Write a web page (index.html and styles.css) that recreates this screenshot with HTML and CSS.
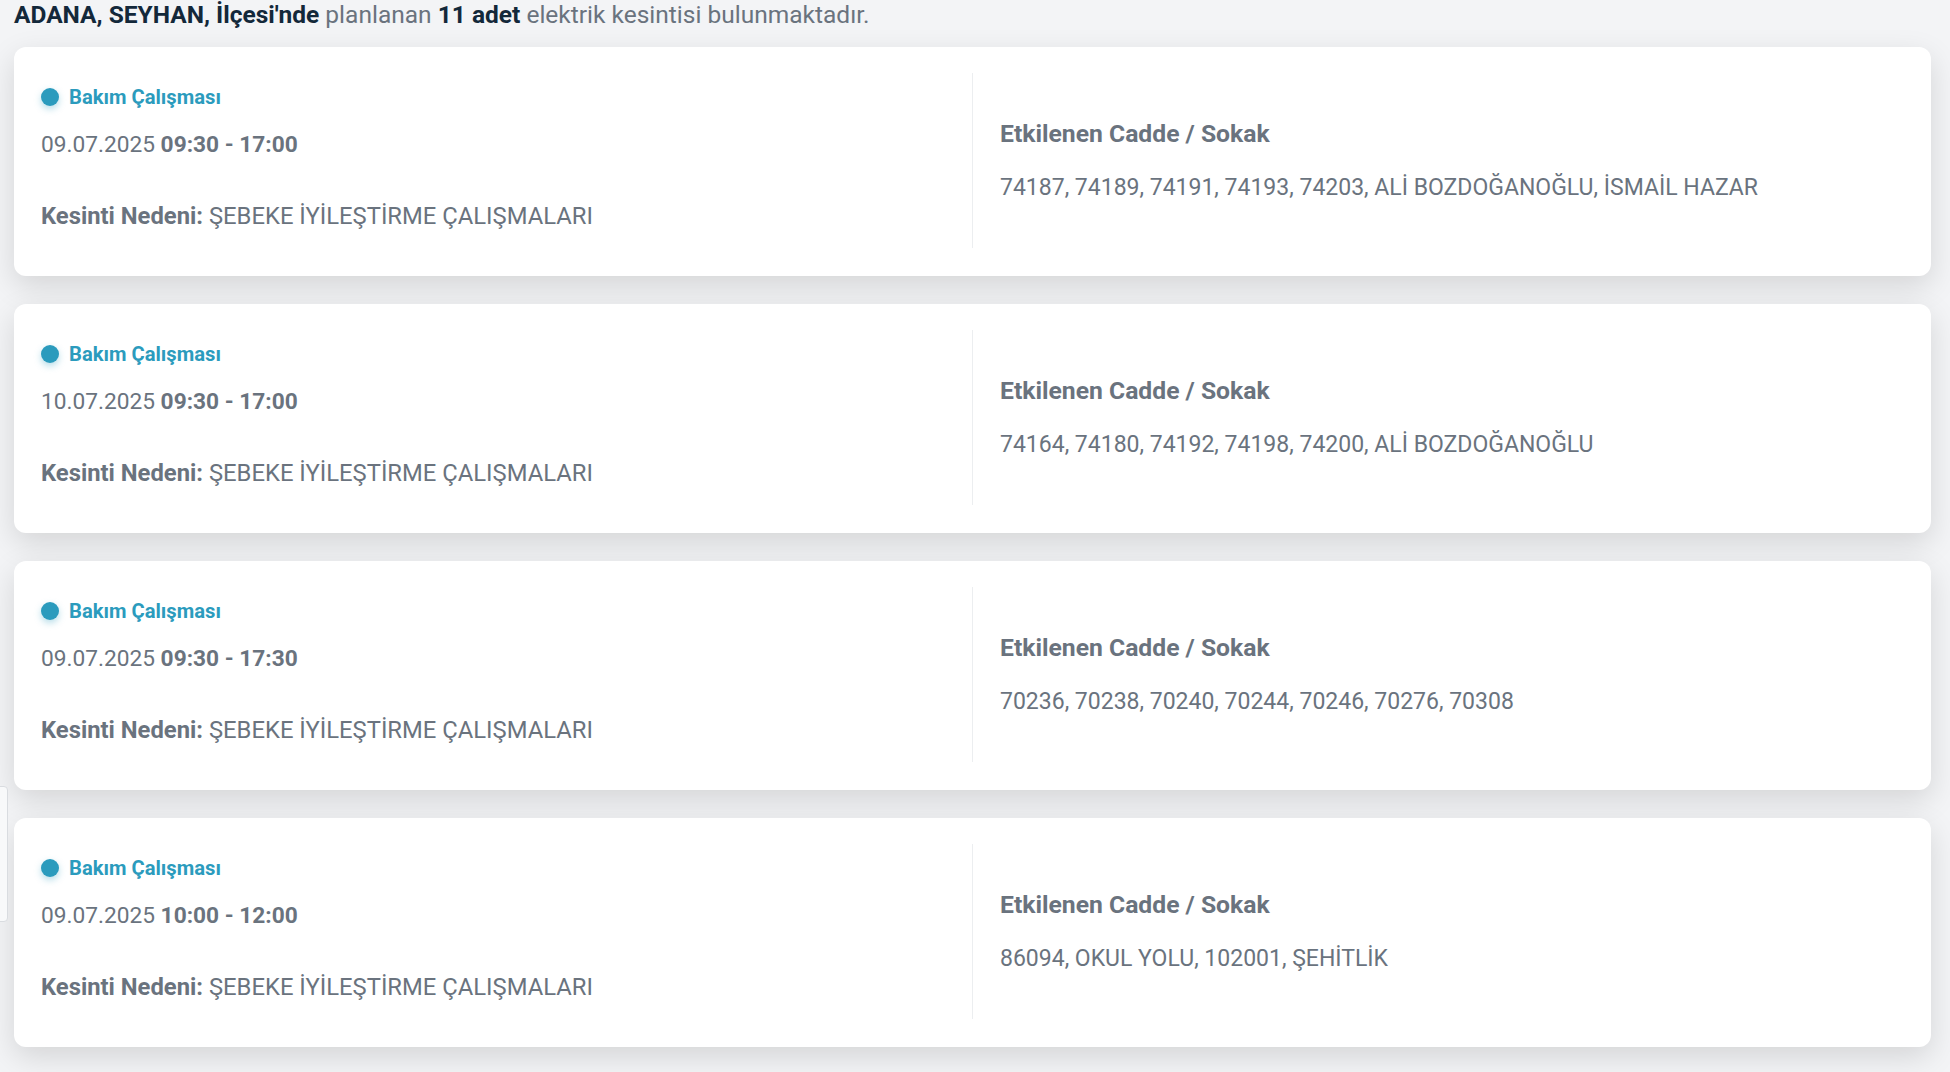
FILE: index.html
```html
<!DOCTYPE html>
<html lang="tr">
<head>
<meta charset="utf-8">
<title>Kesintiler</title>
<link rel="stylesheet" href="styles.css">
</head>
<body>
<div class="page">
  <p class="summary"><strong>ADANA, SEYHAN, İlçesi'nde</strong> planlanan <strong>11 adet</strong> elektrik kesintisi bulunmaktadır.</p>

  <div class="card">
    <div class="col col-left">
      <div class="label"><span class="dot"></span>Bakım Çalışması</div>
      <div class="date">09.07.2025 <b>09:30 - 17:00</b></div>
      <div class="reason"><b>Kesinti Nedeni:</b> ŞEBEKE İYİLEŞTİRME ÇALIŞMALARI</div>
    </div>
    <div class="col col-right">
      <div class="streets-title">Etkilenen Cadde / Sokak</div>
      <div class="streets">74187, 74189, 74191, 74193, 74203, ALİ BOZDOĞANOĞLU, İSMAİL HAZAR</div>
    </div>
  </div>

  <div class="card">
    <div class="col col-left">
      <div class="label"><span class="dot"></span>Bakım Çalışması</div>
      <div class="date">10.07.2025 <b>09:30 - 17:00</b></div>
      <div class="reason"><b>Kesinti Nedeni:</b> ŞEBEKE İYİLEŞTİRME ÇALIŞMALARI</div>
    </div>
    <div class="col col-right">
      <div class="streets-title">Etkilenen Cadde / Sokak</div>
      <div class="streets">74164, 74180, 74192, 74198, 74200, ALİ BOZDOĞANOĞLU</div>
    </div>
  </div>

  <div class="card">
    <div class="col col-left">
      <div class="label"><span class="dot"></span>Bakım Çalışması</div>
      <div class="date">09.07.2025 <b>09:30 - 17:30</b></div>
      <div class="reason"><b>Kesinti Nedeni:</b> ŞEBEKE İYİLEŞTİRME ÇALIŞMALARI</div>
    </div>
    <div class="col col-right">
      <div class="streets-title">Etkilenen Cadde / Sokak</div>
      <div class="streets">70236, 70238, 70240, 70244, 70246, 70276, 70308</div>
    </div>
  </div>

  <div class="card">
    <div class="col col-left">
      <div class="label"><span class="dot"></span>Bakım Çalışması</div>
      <div class="date">09.07.2025 <b>10:00 - 12:00</b></div>
      <div class="reason"><b>Kesinti Nedeni:</b> ŞEBEKE İYİLEŞTİRME ÇALIŞMALARI</div>
    </div>
    <div class="col col-right">
      <div class="streets-title">Etkilenen Cadde / Sokak</div>
      <div class="streets">86094, OKUL YOLU, 102001, ŞEHİTLİK</div>
    </div>
  </div>
</div>
<div class="side-tab"></div>
</body>
</html>
```

FILE: styles.css
```css
html, body {
  margin: 0;
  padding: 0;
  background: #f3f4f6;
  font-family: Roboto, "Noto Sans", Arial, sans-serif;
  color: #6a737e;
  overflow: hidden;
}

.page {
  padding: 0 19px 0 14px;
}

.summary {
  margin: 0 0 17px 0;
  font-size: 24.5px;
  line-height: 30px;
  color: #6a737e;
}

.summary strong {
  color: #13283a;
  font-weight: 700;
}

.card {
  display: flex;
  background: #ffffff;
  border-radius: 12px;
  padding: 26px 0 28px 0;
  margin-bottom: 28px;
  box-shadow: 0 10px 30px rgba(0, 0, 0, 0.13);
}

.col {
  flex: 1 1 0;
  min-width: 0;
  height: 175px;
  box-sizing: border-box;
  padding: 0 27px;
}

.col-left {
  border-right: 1px solid #eceef0;
  padding-top: 10px;
}

.col-right {
  display: flex;
  flex-direction: column;
  justify-content: center;
  gap: 20px;
}

.label {
  display: flex;
  align-items: center;
  gap: 10px;
  font-size: 20.2px;
  line-height: 28px;
  font-weight: 700;
  color: #2b9bbd;
}

.dot {
  flex: none;
  width: 18px;
  height: 18px;
  border-radius: 50%;
  background: #2b9bbd;
  box-shadow: 0 3px 7px rgba(43, 155, 189, 0.35);
}

.date {
  margin-top: 17px;
  font-size: 22.7px;
  line-height: 34px;
}

.date b,
.reason b {
  font-weight: 700;
}

.reason {
  margin-top: 37px;
  font-size: 23.8px;
  line-height: 34px;
}

.streets-title {
  font-size: 24.7px;
  line-height: 34px;
  font-weight: 700;
}

.streets {
  font-size: 23px;
  line-height: 34px;
}

.side-tab {
  position: absolute;
  left: -20px;
  top: 786px;
  width: 26px;
  height: 134px;
  background: #f8f9fa;
  border: 1px solid #d9dce0;
  border-radius: 4px;
}
```
